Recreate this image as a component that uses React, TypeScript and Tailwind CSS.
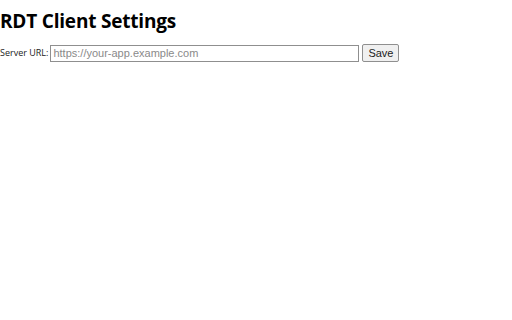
import React, { useState } from 'react';

export default function App() {
  const [url, setUrl] = useState('');

  return (
    <div className="min-h-[320px] w-[512px] bg-white text-black">
      <h1 className="pt-[9px] font-['Open_Sans',sans-serif] text-[19px] leading-[24px] font-bold tracking-[-0.2px]">
        RDT Client Settings
      </h1>
      <div className="mt-[11px] flex items-center">
        <label className="mr-[2px] font-['Open_Sans',sans-serif] text-[9px] text-[#222]">Server URL:</label>
        <input
          type="text"
          value={url}
          onChange={(e) => setUrl(e.target.value)}
          placeholder="https://your-app.example.com"
          className="h-[17px] w-[309px] border border-[#8f8f8f] px-[2px] font-['Liberation_Sans',Arial,sans-serif] text-[11px] placeholder:text-[#8a8a8a]"
        />
        <button
          type="button"
          className="ml-[3px] h-[18px] w-[37px] rounded-[2px] border border-[#8f8f8f] bg-[#f0f0f0] font-['Liberation_Sans',Arial,sans-serif] text-[11px] leading-none text-[#222]"
        >
          Save
        </button>
      </div>
    </div>
  );
}
